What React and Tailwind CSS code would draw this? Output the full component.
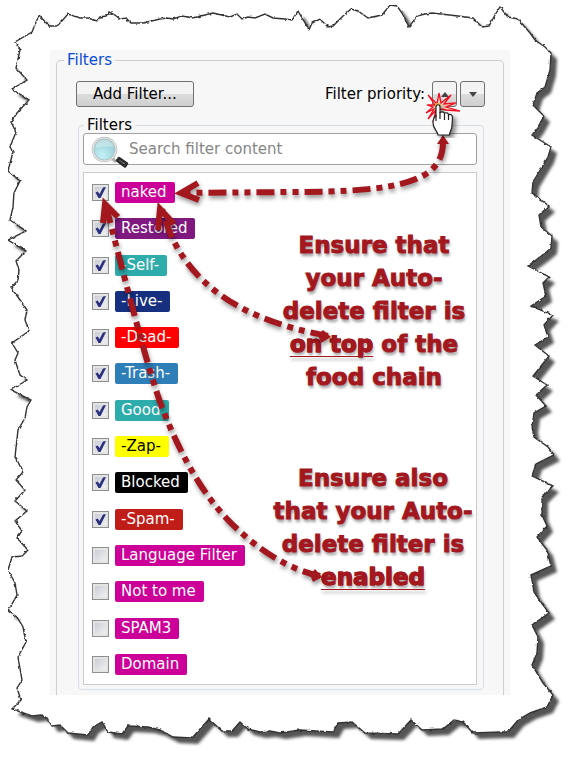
import React from "react";

const filters = [
  { name: "naked", color: "bg-[#cc0099] text-white", enabled: true },
  { name: "Restored", color: "bg-[#7f187f] text-white", enabled: true },
  { name: "-Self-", color: "bg-[#2eacac] text-white", enabled: true },
  { name: "-Live-", color: "bg-[#162f7f] text-white", enabled: true },
  { name: "-Dead-", color: "bg-[#ff0000] text-white", enabled: true },
  { name: "-Trash-", color: "bg-[#2e7eb8] text-white", enabled: true },
  { name: "Good", color: "bg-[#2eacac] text-white", enabled: true },
  { name: "-Zap-", color: "bg-[#ffff00] text-black", enabled: true },
  { name: "Blocked", color: "bg-black text-white", enabled: true },
  { name: "-Spam-", color: "bg-[#c01c18] text-white", enabled: true },
  { name: "Language Filter", color: "bg-[#cc0099] text-white", enabled: false },
  { name: "Not to me", color: "bg-[#cc0099] text-white", enabled: false },
  { name: "SPAM3", color: "bg-[#cc0099] text-white", enabled: false },
  { name: "Domain", color: "bg-[#cc0099] text-white", enabled: false },
];

// Outline of the torn sheet, clockwise from the top left corner
const tornEdge =
  "39,15 49,26 57,26 61,22 68,14 80,18 88,18 97,21 100,17 106,16 109,12 115,15 120,19 126,18 131,23 143,23 160,19 167,18 173,19 182,16 193,18 213,13 230,17 237,14 242,19 248,17 255,18 265,14 273,18 285,19 292,20 298,11 305,23 309,30 312,23 320,19 328,27 333,26 343,16 351,9 358,11 368,18 382,15 390,5 397,6 402,13 409,27 417,16 425,14 432,13 458,16 473,18 482,27 489,26 495,15 500,7 508,17 518,19 530,33 535,40 545,47 551,53 550,70 545,87 537,93 533,105 544,116 538,127 532,135 551,147 548,157 542,167 533,182 532,193 549,206 539,215 541,227 552,236 551,248 544,254 528,266 549,277 543,283 546,296 531,306 553,315 544,325 548,337 535,345 549,356 533,376 547,385 536,395 546,406 534,413 532,427 534,437 548,447 554,455 536,464 532,476 553,486 542,497 542,515 547,526 537,537 547,550 551,566 531,575 534,592 538,598 549,613 532,625 538,637 537,653 532,665 543,683 553,695 547,707 530,713 518,720 508,732 500,732 473,733 463,722 454,720 443,729 422,730 411,720 398,734 365,733 352,722 338,723 333,732 300,730 280,733 270,731 260,732 248,729 240,722 232,731 222,731 209,719 192,738 173,737 160,730 148,727 128,726 122,734 108,732 102,722 93,727 88,735 68,733 60,725 52,726 47,718 41,715 32,716 12,709 21,700 17,688 22,680 18,657 26,642 23,627 17,617 8,611 17,595 15,583 8,570 12,557 22,556 28,550 17,538 22,531 15,521 27,511 15,501 25,490 16,480 23,472 17,460 15,457 18,430 25,418 27,407 31,400 11,390 27,380 20,375 15,360 18,353 12,343 29,331 25,320 27,310 18,297 11,288 18,280 19,270 16,261 26,251 8,240 26,231 10,220 13,207 14,193 20,181 8,171 13,152 10,147 16,132 11,122 17,113 29,100 12,89 27,80 16,68 20,50 15,42 32,32";

function TornPaper() {
  return (
    <svg
      className="absolute inset-0 h-full w-full"
      viewBox="0 0 575 761"
      preserveAspectRatio="none"
      aria-hidden="true"
    >
      <defs>
        <filter id="rough" x="0" y="0" width="100%" height="100%">
          <feTurbulence type="fractalNoise" baseFrequency="0.3" numOctaves="1" seed="4" result="noise" />
          <feDisplacementMap
            in="SourceGraphic"
            in2="noise"
            scale="3"
            xChannelSelector="R"
            yChannelSelector="G"
          />
        </filter>
        <filter id="soft" x="-5%" y="-5%" width="110%" height="110%">
          <feGaussianBlur stdDeviation="1.6" />
        </filter>
      </defs>
      <polygon points={tornEdge} fill="#555" filter="url(#soft)" transform="translate(6 6)" />
      <polygon points={tornEdge} fill="#fff" stroke="#333" strokeWidth="1.4" filter="url(#rough)" />
    </svg>
  );
}

function SearchIcon() {
  return (
    <svg className="h-10 w-[39px] shrink-0" viewBox="0 0 39 40" aria-hidden="true">
      <defs>
        <radialGradient id="lens" cx="0.4" cy="0.75" r="0.8">
          <stop offset="0" stopColor="#c4f1f5" />
          <stop offset="0.6" stopColor="#a3d8df" />
          <stop offset="1" stopColor="#8fc0c9" />
        </radialGradient>
        <linearGradient id="handle" x1="0" y1="1" x2="1" y2="0">
          <stop offset="0.3" stopColor="#222" />
          <stop offset="0.55" stopColor="#888" />
          <stop offset="0.8" stopColor="#222" />
        </linearGradient>
      </defs>
      <path d="M22 29l4 4" stroke="#aaa" strokeWidth="3" />
      <path d="M27 31.500l8 6l2-3l-8-5.500z" fill="url(#handle)" stroke="#2a2a2a" strokeWidth="2.500" strokeLinejoin="round" />
      <circle cx="14.500" cy="20.500" r="11.500" fill="url(#lens)" stroke="#b5baba" strokeWidth="2.600" />
      <circle cx="14.500" cy="20.500" r="11.500" fill="none" stroke="#e8ecec" strokeWidth="1.200" />
      <path d="M5.500 19a9 8 0 0 1 18 -1q-9 -2 -18 1z" fill="#fff" opacity="0.35" />
    </svg>
  );
}

function FilterRow({ name, color, enabled }) {
  return (
    <li>
      <label className="flex items-center gap-[6px]">
        <span className="relative h-[17px] w-[17px]">
          <input
            type="checkbox"
            defaultChecked={enabled}
            className="peer block h-[17px] w-[17px] appearance-none border border-[#8e8f8f] bg-linear-to-br from-[#c3c8d0] to-[#f6f6f6] ring-2 ring-[#e4e4e4] ring-inset"
          />
          <svg
            className="pointer-events-none absolute inset-0 hidden peer-checked:block"
            viewBox="0 0 17 17"
            aria-hidden="true"
          >
            <path d="M3.500 8.500l2.200-1 1.800 2.500L11 3.500l3-.5L8.500 14H6.500z" fill="#2b2f7d" />
          </svg>
        </span>
        <span className={`rounded-[2px] pr-2 pl-[6px] leading-[21px] ${color}`}>{name}</span>
      </label>
    </li>
  );
}

function PriorityButton({ label, children }) {
  return (
    <button
      type="button"
      aria-label={label}
      className="flex h-[26px] w-[25px] items-center justify-center rounded-[3px] border border-[#707070] bg-linear-to-b from-[#f3f3f3] from-50% via-[#dddddd] via-50% to-[#cfcfcf] text-[#444]"
    >
      <svg className="h-2 w-2" viewBox="0 0 8 8" fill="currentColor" aria-hidden="true">
        {children}
      </svg>
    </button>
  );
}

function Annotations() {
  return (
    <div className="pointer-events-none absolute inset-0 text-[#a3171e]">
      <p className="absolute top-[229px] left-[266px] w-[216px] text-center text-[23px] leading-[33px] font-bold whitespace-nowrap [-webkit-text-stroke:1px_#a3171e] text-shadow-[1px_3px_3px_#00000066]">
        Ensure that
        <br />
        your Auto-
        <br />
        delete filter is
        <br />
        <span className="underline decoration-1 underline-offset-4">on top</span> of the
        <br />
        food chain
      </p>
      <p className="absolute top-[462px] left-[265px] w-[216px] text-center text-[23px] leading-[33px] font-bold whitespace-nowrap [-webkit-text-stroke:1px_#a3171e] text-shadow-[1px_3px_3px_#00000066]">
        Ensure also
        <br />
        that your Auto-
        <br />
        delete filter is
        <br />
        <span className="underline decoration-1 underline-offset-4">enabled</span>
      </p>
      <svg
        className="absolute inset-0 h-full w-full drop-shadow-[1px_3px_2px_#00000066]"
        viewBox="0 0 575 761"
        preserveAspectRatio="none"
        fill="none"
        stroke="currentColor"
        strokeWidth="6"
        aria-hidden="true"
      >
        <g strokeDasharray="18 6 6 6 6 6">
          <path d="M443 142C443 182 400 192 290 192L182 193" />
          <path d="M328 336C270 325 185 300 162 209" />
          <path d="M320 576C290 570 257 550 228 520S178 448 163 410S120 260 106 206" />
        </g>
        <path d="M198 183L181 193L199 200" />
        <path d="M158 230L160 209L174 224" />
        <path d="M103 223L105 204L118 217" />
        <g fill="currentColor" stroke="none">
          <path d="M443 135L449 144L437 144z" />
          <path d="M323 330L331 337L321 343L318 335z" />
          <path d="M315 569L322 577L313 582L310 575z" />
        </g>
      </svg>
      <svg className="absolute top-[90px] left-[424px] h-12 w-10" viewBox="424 90 40 48" aria-hidden="true">
        <path
          d="M428 95L437 104L439 93L441 103L451 95L444 104L456 103L446 107L460 111L446 110L440 109L433 122L436 110L428 119L434 109L426 113L433 107L427 105L435 105z"
          fill="#f3c9b8"
          stroke="#ee1020"
          strokeWidth="1.300"
        />
        <circle cx="438" cy="106" r="3" fill="#e8c64a" />
        <path
          d="M436 116V107c0-3 4-3 4 0v6c1-2 4-1 4.500 .5c1-1.500 4-.5 4 1.500c1.500-1.500 4 0 4 2.500l-.5 8c0 4-2 5-2.500 9.500H438c0-4-5-6-5-12c0-3 0-5 3-7z"
          fill="#fff"
          stroke="#222"
          strokeWidth="1.200"
          className="drop-shadow-[3px_3px_2px_#00000077]"
        />
        <path d="M440 112v7M444.500 114v6M448.500 115v5M436 115v6" stroke="#222" strokeWidth="1.200" />
      </svg>
    </div>
  );
}

function App() {
  return (
    <div className="relative min-h-screen bg-white pt-[50px] pr-[65px] pb-[66px] pl-[50px] font-['DejaVu_Sans',Verdana,sans-serif] text-[15px] text-black">
      <TornPaper />
      <main className="relative bg-[#f7f7f7] px-[6px]">
        <fieldset className="rounded-t-[5px] border border-b-0 border-[#cfcfcf] pr-[18px] pb-[5px] pl-[19px]">
          <legend className="-ml-3 px-[3px] leading-5 text-[#0a4bd6]">Filters</legend>
          <div className="mt-[11px] flex items-center justify-between">
            <button
              type="button"
              className="h-[26px] rounded-[3px] border border-[#707070] bg-linear-to-b from-[#f3f3f3] from-50% via-[#dddddd] via-50% to-[#cfcfcf] px-4 leading-6"
            >
              Add Filter...
            </button>
            <div className="flex items-center gap-[3px]">
              <span className="mr-1">Filter priority:</span>
              <PriorityButton label="Move up">
                <path d="M4 2l4 5H0z" />
              </PriorityButton>
              <PriorityButton label="Move down">
                <path d="M4 7l4-5H0z" />
              </PriorityButton>
            </div>
          </div>
          <fieldset className="mt-[10px] mr-[1px] ml-[2px] rounded-[4px] border border-[#d5dfe5] pr-[6px] pb-[4px] pl-[4px]">
            <legend className="ml-[1px] px-[3px] leading-4">Filters</legend>
            <label className="flex h-8 items-center rounded-[3px] border border-[#a0a0a0] bg-white pl-[6px]">
              <SearchIcon />
              <input
                type="text"
                aria-label="Search filter content"
                placeholder="Search filter content"
                className="min-w-0 flex-1 bg-transparent outline-none placeholder:text-[#868686]"
              />
            </label>
            <ul className="mt-[7px] flex min-h-[513px] flex-col justify-between border border-[#cccccc] bg-white px-2 py-[9px]">
              {filters.map((filter) => (
                <FilterRow key={filter.name} {...filter} />
              ))}
            </ul>
          </fieldset>
        </fieldset>
      </main>
      <Annotations />
    </div>
  );
}

export default App;
